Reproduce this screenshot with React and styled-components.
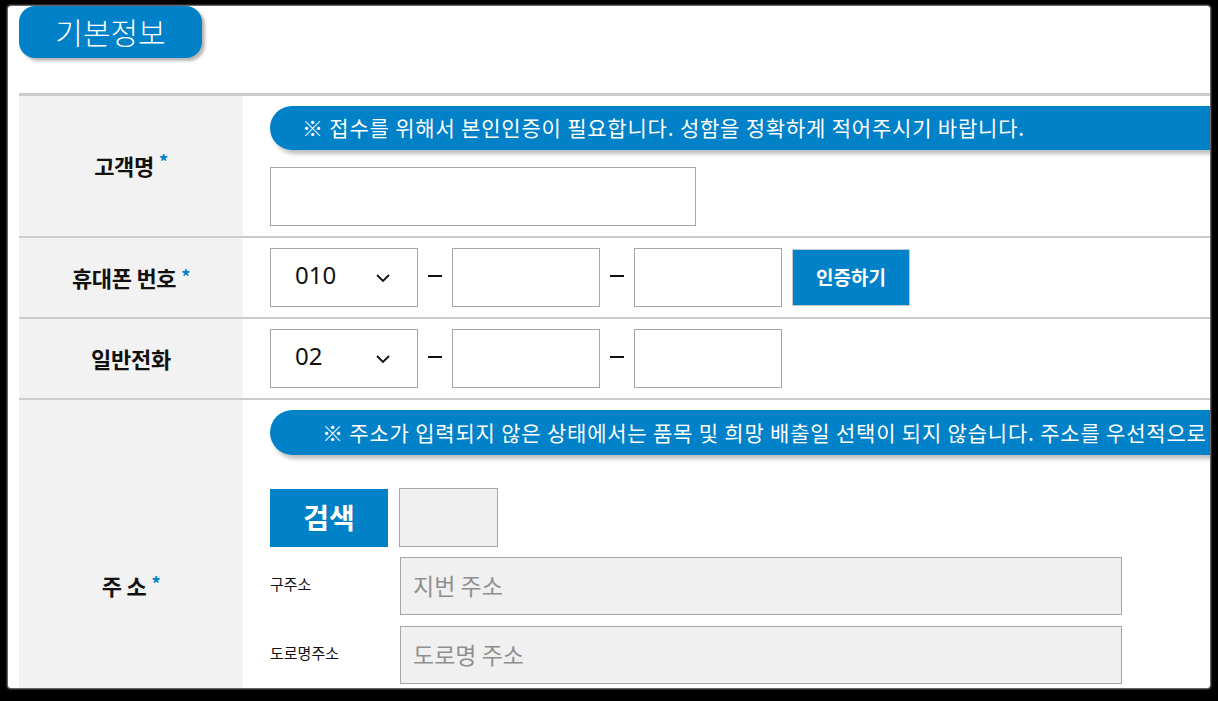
import React from "react";
import styled, { createGlobalStyle } from "styled-components";

const GlobalStyle = createGlobalStyle`
  html, body {
    margin: 0;
    padding: 0;
    background: #000;
  }
  body {
    font-family: "Noto Sans CJK KR", "Noto Sans", sans-serif;
    color: #111;
  }
  * { box-sizing: border-box; }
`;

const BLUE = "#0081c8";

const Frame = styled.div`
  padding: 6px 8px 13px 8px;
  background: #000;
`;

const Panel = styled.div`
  height: 682px;
  background: #fff;
  border-radius: 3px;
  overflow: hidden;
  padding-left: 11px;
  box-shadow: 0 0 2px 1px rgba(255, 255, 255, 0.55);
`;

const TitleTab = styled.div`
  width: 183px;
  height: 52px;
  border-radius: 16px;
  background: ${BLUE};
  color: #fff;
  font-size: 30px;
  font-weight: 300;
  display: flex;
  align-items: center;
  justify-content: center;
  padding-bottom: 3px;
  box-shadow: 3px 3px 3px rgba(0, 0, 0, 0.28);
`;

const Table = styled.div`
  margin-top: 35px;
  border-top: 3px solid #cccccc;
`;

const Row = styled.div`
  display: grid;
  grid-template-columns: 224px 1fr;
  border-bottom: 2px solid #cccccc;
  min-height: ${(p) => p.$min || 0}px;
`;

const Label = styled.div`
  background: #f2f2f2;
  display: flex;
  align-items: center;
  justify-content: center;
  font-size: 22px;
  font-weight: 700;
  color: #111;
  letter-spacing: -0.3px;
  padding-bottom: 2px;
`;

const Star = styled.span`
  color: ${BLUE};
  font-size: 18px;
  margin-left: 5px;
  align-self: flex-start;
  margin-top: ${(p) => p.$top}px;
`;

const Cell = styled.div`
  padding: 10px 0 10px 27px;
  display: flex;
  flex-direction: column;
  min-width: 0;
`;

const Notice = styled.div`
  height: ${(p) => p.$h}px;
  margin-right: -40px;
  border-radius: 23px 0 0 23px;
  background: ${BLUE};
  color: #fff;
  font-size: 21px;
  font-weight: 400;
  display: flex;
  align-items: center;
  padding-left: ${(p) => p.$pad}px;
  white-space: nowrap;
  overflow: hidden;
  box-shadow: 3px 4px 4px rgba(0, 0, 0, 0.25);
  letter-spacing: 0.8px;
  padding-bottom: 2px;
`;

const TextBox = styled.div`
  width: ${(p) => p.$w}px;
  height: ${(p) => p.$h || 59}px;
  border: 1px solid #a6a6a6;
  background: ${(p) => (p.$gray ? "#f0f0f0" : "#fff")};
  margin-top: ${(p) => p.$mt || 0}px;
  flex-shrink: 0;
  display: flex;
  align-items: center;
  padding-left: 12px;
  font-size: 23px;
  color: #8f8f8f;
  padding-bottom: 2px;
`;

const PhoneLine = styled.div`
  display: flex;
  align-items: center;
`;

const Select = styled.div`
  width: 148px;
  height: 59px;
  border: 1px solid #a6a6a6;
  display: flex;
  align-items: center;
  justify-content: space-between;
  padding: 0 26px 0 24px;
  font-family: "Noto Sans", sans-serif;
  font-size: 24px;
  color: #111;
  padding-bottom: 6px;
`;

const Dash = styled.span`
  width: 14px;
  height: 2px;
  background: #111;
  margin: 0 10px 4px 10px;
`;

const BlueButton = styled.div`
  width: ${(p) => p.$w}px;
  height: ${(p) => p.$h}px;
  margin-left: ${(p) => p.$ml || 0}px;
  background: ${BLUE};
  border: 1px solid ${(p) => p.$bd || BLUE};
  color: #fff;
  font-size: ${(p) => p.$fs}px;
  font-weight: 700;
  display: flex;
  align-items: center;
  justify-content: center;
  padding-bottom: 2px;
`;

const SearchLine = styled.div`
  display: flex;
  align-items: center;
  gap: 11px;
  margin-top: 33px;
`;

const AddrLine = styled.div`
  display: flex;
  align-items: center;
  margin-top: ${(p) => p.$mt}px;
`;

const AddrLabel = styled.div`
  width: 130px;
  font-size: 15px;
  color: #111;
  padding-bottom: 6px;
`;

const Chevron = () => (
  <svg width="16" height="10" viewBox="0 0 16 10" style={{ marginTop: 6 }}>
    <path d="M2 2l6 6 6-6" fill="none" stroke="#111" strokeWidth="1.8" />
  </svg>
);

const PhoneRow = ({ code, withButton }) => (
  <PhoneLine>
    <Select>
      <span>{code}</span>
      <Chevron />
    </Select>
    <Dash />
    <TextBox $w={148} />
    <Dash />
    <TextBox $w={148} />
    {withButton && (
      <BlueButton $w={118} $h={57} $ml={10} $fs={19} $bd="#c8c8c8">
        인증하기
      </BlueButton>
    )}
  </PhoneLine>
);

export default function App() {
  return (
    <>
      <GlobalStyle />
      <Frame>
        <Panel>
          <TitleTab>기본정보</TitleTab>
          <Table>
            <Row>
              <Label>
                고객명<Star $top={52}>*</Star>
              </Label>
              <Cell>
                <Notice $h={44} $pad={32}>
                  ※ 접수를 위해서 본인인증이 필요합니다. 성함을 정확하게 적어주시기 바랍니다.
                </Notice>
                <TextBox $w={426} $mt={17} />
              </Cell>
            </Row>
            <Row>
              <Label>
                휴대폰 번호<Star $top={25}>*</Star>
              </Label>
              <Cell>
                <PhoneRow code="010" withButton />
              </Cell>
            </Row>
            <Row>
              <Label>일반전화</Label>
              <Cell>
                <PhoneRow code="02" />
              </Cell>
            </Row>
            <Row $min={374}>
              <Label>
                주 소<Star $top={170}>*</Star>
              </Label>
              <Cell>
                <Notice $h={45} $pad={52}>
                  ※ 주소가 입력되지 않은 상태에서는 품목 및 희망 배출일 선택이 되지 않습니다. 주소를 우선적으로
                </Notice>
                <SearchLine>
                  <BlueButton $w={118} $h={58} $fs={28}>
                    검색
                  </BlueButton>
                  <TextBox $w={99} $gray />
                </SearchLine>
                <AddrLine $mt={10}>
                  <AddrLabel>구주소</AddrLabel>
                  <TextBox $w={722} $h={58} $gray>
                    지번 주소
                  </TextBox>
                </AddrLine>
                <AddrLine $mt={11}>
                  <AddrLabel>도로명주소</AddrLabel>
                  <TextBox $w={722} $h={58} $gray>
                    도로명 주소
                  </TextBox>
                </AddrLine>
              </Cell>
            </Row>
          </Table>
        </Panel>
      </Frame>
    </>
  );
}
